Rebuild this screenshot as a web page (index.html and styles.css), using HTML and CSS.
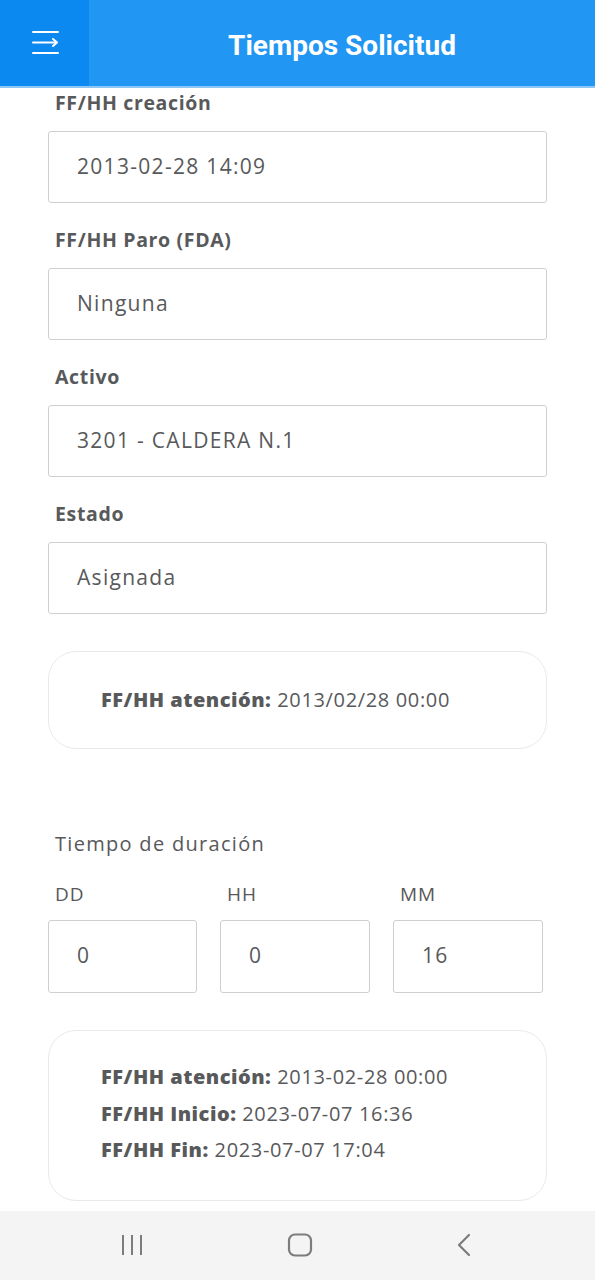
FILE: index.html
```html
<!DOCTYPE html>
<html lang="es">
<head>
<meta charset="utf-8">
<title>Tiempos Solicitud</title>
<link rel="stylesheet" href="styles.css">
</head>
<body>
<div class="screen">
  <header class="appbar">
    <div class="menu-btn">
      <svg width="28" height="26" viewBox="0 0 28 26" fill="none" stroke="#fff" stroke-width="2" stroke-linecap="round" stroke-linejoin="round">
        <line x1="1" y1="2" x2="26" y2="2"/>
        <line x1="1" y1="12.5" x2="24" y2="12.5"/>
        <polyline points="21,9 25,12.5 21,16"/>
        <line x1="1" y1="23" x2="26" y2="23"/>
      </svg>
    </div>
    <h1 class="title">Tiempos Solicitud</h1>
  </header>

  <main class="content">
    <div class="field">
      <label class="label">FF/HH creación</label>
      <div class="input">2013-02-28 14:09</div>
    </div>
    <div class="field">
      <label class="label">FF/HH Paro (FDA)</label>
      <div class="input">Ninguna</div>
    </div>
    <div class="field">
      <label class="label">Activo</label>
      <div class="input">3201 - CALDERA N.1</div>
    </div>
    <div class="field">
      <label class="label">Estado</label>
      <div class="input">Asignada</div>
    </div>

    <div class="card card-single">
      <p class="line"><b>FF/HH atención:</b> 2013/02/28 00:00</p>
    </div>

    <p class="section-title">Tiempo de duración</p>
    <div class="duration">
      <div class="dur-col">
        <span class="dur-label">DD</span>
        <div class="input small">0</div>
      </div>
      <div class="dur-col">
        <span class="dur-label">HH</span>
        <div class="input small">0</div>
      </div>
      <div class="dur-col">
        <span class="dur-label">MM</span>
        <div class="input small">16</div>
      </div>
    </div>

    <div class="card card-multi">
      <p class="line"><b>FF/HH atención:</b> 2013-02-28 00:00</p>
      <p class="line"><b>FF/HH Inicio:</b> 2023-07-07 16:36</p>
      <p class="line"><b>FF/HH Fin:</b> 2023-07-07 17:04</p>
    </div>
  </main>

  <nav class="navbar">
    <svg class="nav-icon" width="22" height="22" viewBox="0 0 22 22" fill="none" stroke="#7c7c7c" stroke-width="2">
      <line x1="2" y1="1" x2="2" y2="21"/>
      <line x1="11" y1="1" x2="11" y2="21"/>
      <line x1="20" y1="1" x2="20" y2="21"/>
    </svg>
    <svg class="nav-icon" width="26" height="24" viewBox="0 0 26 24" fill="none" stroke="#7c7c7c" stroke-width="2.2">
      <rect x="2" y="1.5" width="22" height="21" rx="6"/>
    </svg>
    <svg class="nav-icon" width="16" height="24" viewBox="0 0 16 24" fill="none" stroke="#7c7c7c" stroke-width="2.2" stroke-linecap="round" stroke-linejoin="round">
      <polyline points="13,2 3,12 13,22"/>
    </svg>
  </nav>
</div>
</body>
</html>
```

FILE: styles.css
```css
* { box-sizing: border-box; }

html, body {
  margin: 0;
  padding: 0;
  background: #ffffff;
}

.screen {
  width: 595px;
  height: 1280px;
  display: flex;
  flex-direction: column;
  overflow: hidden;
  font-family: "Open Sans", "DejaVu Sans", sans-serif;
  color: #57585a;
}

.appbar {
  height: 88px;
  flex: 0 0 88px;
  display: flex;
  background: #2196f3;
  border-bottom: 2px solid #8ec6f6;
}

.menu-btn {
  width: 89px;
  background: #0c88f1;
  display: flex;
  align-items: center;
  justify-content: flex-start;
  padding-left: 32px;
  padding-bottom: 1px;
}

.title {
  flex: 1;
  margin: 0;
  text-align: center;
  font-family: Roboto, "Liberation Sans", sans-serif;
  font-weight: 700;
  font-size: 28px;
  color: #ffffff;
  line-height: 86px;
  padding-top: 3px;
}

.content {
  flex: 1;
  padding: 1px 48px 0 48px;
  display: flex;
  flex-direction: column;
}

.field {
  display: flex;
  flex-direction: column;
  margin-bottom: 23px;
}

.label {
  font-weight: 700;
  font-size: 19.5px;
  line-height: 28px;
  letter-spacing: 0.65px;
  padding-left: 7px;
  margin-bottom: 14px;
  color: #58595b;
}

.input {
  height: 72px;
  border: 1px solid #cfcfcf;
  border-radius: 3px;
  display: flex;
  align-items: center;
  padding-left: 28px;
  padding-bottom: 3px;
  font-size: 21px;
  letter-spacing: 1.3px;
  color: #58595b;
}

.card {
  border: 1.5px solid #e9e9e9;
  border-radius: 28px;
  padding-left: 52px;
}

.card-single {
  margin-top: 14px;
  height: 98px;
  display: flex;
  align-items: center;
}

.line {
  margin: 0;
  font-size: 20px;
  line-height: 36.5px;
  letter-spacing: 0.65px;
  color: #58595b;
}

.line b {
  font-weight: 800;
  letter-spacing: 0.5px;
}

.section-title {
  margin: 81px 0 0 0;
  padding-left: 7px;
  font-size: 20px;
  line-height: 28px;
  letter-spacing: 1.3px;
}

.duration {
  margin-top: 22px;
  display: grid;
  grid-template-columns: 149px 150px 150px;
  column-gap: 23px;
}

.dur-col {
  display: flex;
  flex-direction: column;
}

.dur-label {
  font-size: 19px;
  line-height: 28px;
  letter-spacing: 1px;
  padding-left: 7px;
  margin-bottom: 12px;
}

.input.small {
  height: 73px;
  padding-left: 28px;
}

.card-multi {
  margin-top: 37px;
  height: 171px;
  padding-top: 28px;
}

.navbar {
  flex: 0 0 69px;
  height: 69px;
  background: #f4f4f4;
  display: flex;
  align-items: center;
  justify-content: space-between;
  padding: 0 123px 2px 121px;
}

.nav-icon {
  display: block;
}
```
